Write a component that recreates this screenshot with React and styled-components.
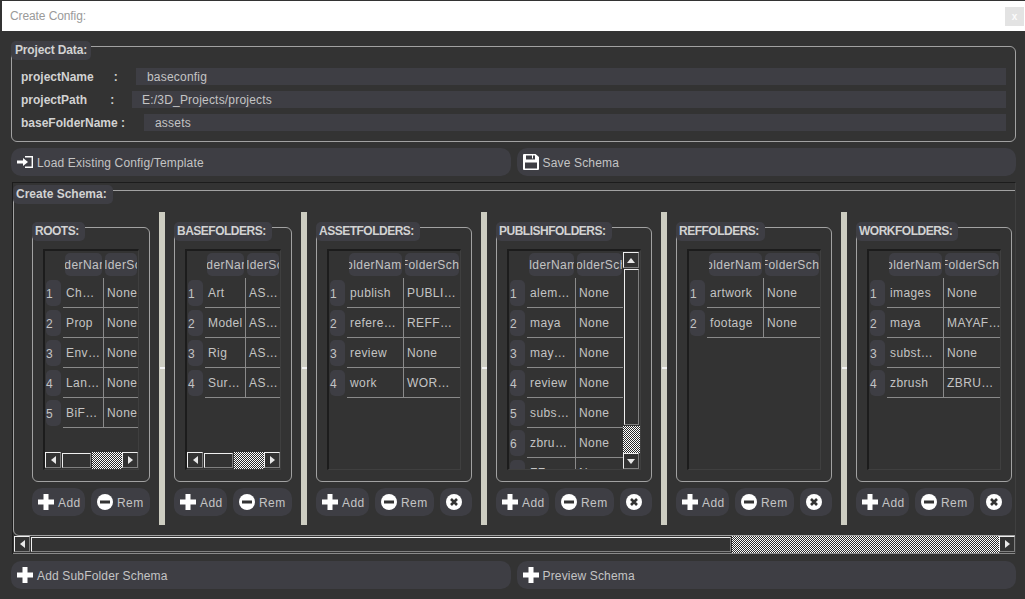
import React from 'react'
import styled, { createGlobalStyle } from 'styled-components'

const Global = createGlobalStyle`
  html, body { margin: 0; padding: 0; background: #333333; }
  * { box-sizing: border-box; }
`

const schemas = [
  { title: 'ROOTS:', width: 118, cols: [40, 35], hbar: true, rows: [['Ch…', 'None'], ['Prop', 'None'], ['Env…', 'None'], ['Lan…', 'None'], ['BiF…', 'None']] },
  { title: 'BASEFOLDERS:', width: 118, cols: [40, 35], hbar: true, rows: [['Art', 'AS…'], ['Model', 'AS…'], ['Rig', 'AS…'], ['Sur…', 'AS…']] },
  { title: 'ASSETFOLDERS:', width: 156, cols: [56, 57], del: true, rows: [['publish', 'PUBLI…'], ['refere…', 'REFF…'], ['review', 'None'], ['work', 'WOR…']] },
  { title: 'PUBLISHFOLDERS:', width: 156, cols: [48, 48], del: true, vbar: true, rows: [['alem…', 'None'], ['maya', 'None'], ['may…', 'None'], ['review', 'None'], ['subs…', 'None'], ['zbru…', 'None'], ['FF…', 'None']] },
  { title: 'REFFOLDERS:', width: 156, cols: [56, 57], del: true, rows: [['artwork', 'None'], ['footage', 'None']] },
  { title: 'WORKFOLDERS:', width: 156, cols: [56, 57], del: true, rows: [['images', 'None'], ['maya', 'MAYAF…'], ['subst…', 'None'], ['zbrush', 'ZBRU…']] },
]

const PlusIcon = () => (
  <svg width="16" height="16" viewBox="0 0 16 16"><path d="M5.500 0h5v5.500H16v5h-5.500V16h-5v-5.500H0v-5h5.500z" fill="#fff" /></svg>
)
const MinusIcon = () => (
  <svg width="16" height="16" viewBox="0 0 16 16"><circle cx="8" cy="8" r="8" fill="#fff" /><rect x="3" y="6.500" width="10" height="3" fill="#333" /></svg>
)
const CloseIcon = () => (
  <svg width="16" height="16" viewBox="0 0 16 16"><circle cx="8" cy="8" r="8" fill="#fff" /><path d="M5 5l6 6M11 5l-6 6" stroke="#333" strokeWidth="2.6" /></svg>
)
const LoadIcon = () => (
  <svg width="16" height="12" viewBox="0 0 16 12"><path d="M8 .7h7.300v10.600H8" fill="none" stroke="#fff" strokeWidth="1.400" /><path d="M0 4.500h6V2l5 4-5 4V7.500H0z" fill="#fff" /></svg>
)
const SaveIcon = () => (
  <svg width="16" height="16" viewBox="0 0 16 16"><path fillRule="evenodd" d="M0 1a1 1 0 0 1 1-1h11.500L16 3v12a1 1 0 0 1-1 1H1a1 1 0 0 1-1-1zM3 1.500V5.500h9V1.500H10V4.500H9V1.500zM2 8.500V14.500h12V8.500z" fill="#fff" /></svg>
)

const HScroll = ({ thumb }) => (
  <HBar>
    <ArrowBtn $dir="left" />
    <Thumb $grow={thumb} />
    <Checker $grow={100 - thumb} />
    <ArrowBtn $dir="right" />
  </HBar>
)

const VScroll = () => (
  <VBar>
    <ArrowBtn $dir="up" />
    <Thumb $grow={85} />
    <Checker $grow={15} />
    <ArrowBtn $dir="down" />
  </VBar>
)

const SchemaColumn = ({ schema }) => (
  <Column $width={schema.width}>
    <GroupBox>
      <Legend $caps>{schema.title}</Legend>
      <Table>
        <TableMain>
          <TableBody>
            <Row $c1={schema.cols[0]} $c2={schema.cols[1]} $head>
              <span />
              <HeadCell>folderName</HeadCell>
              <HeadCell>subFolderSchema</HeadCell>
            </Row>
            {schema.rows.map((row, i) => (
              <Row key={i} $c1={schema.cols[0]} $c2={schema.cols[1]}>
                <RowNum>{i + 1}</RowNum>
                <Cell>{row[0]}</Cell>
                <Cell $second>{row[1]}</Cell>
              </Row>
            ))}
          </TableBody>
          {schema.vbar && <VScroll />}
        </TableMain>
        {schema.hbar && <HScroll thumb={47} />}
      </Table>
    </GroupBox>
    <ActionRow>
      <SmallButton $w={53}><PlusIcon /><ButtonText>Add</ButtonText></SmallButton>
      <SmallButton $w={59}><MinusIcon /><ButtonText>Rem</ButtonText></SmallButton>
      {schema.del && <SmallButton $w={32}><CloseIcon /></SmallButton>}
    </ActionRow>
  </Column>
)

export default function App() {
  return (
    <>
      <Global />
      <Page>
        <TitleBar>
          <TitleText>Create Config:</TitleText>
          <WinClose>x</WinClose>
        </TitleBar>
        <Content>
          <ProjectBox>
            <Legend>Project Data:</Legend>
            <FieldRow>
              <FieldLabel $w={115}>projectName{'      '}:</FieldLabel>
              <FieldInput $pad={11}>baseconfig</FieldInput>
            </FieldRow>
            <FieldRow>
              <FieldLabel $w={111}>projectPath{'       '}:</FieldLabel>
              <FieldInput $pad={10}>E:/3D_Projects/projects</FieldInput>
            </FieldRow>
            <FieldRow>
              <FieldLabel $w={123}>baseFolderName :</FieldLabel>
              <FieldInput $pad={11}>assets</FieldInput>
            </FieldRow>
          </ProjectBox>
          <ButtonRow>
            <WideButton><LoadIcon /><ButtonText>Load Existing Config/Template</ButtonText></WideButton>
            <WideButton><SaveIcon /><ButtonText>Save Schema</ButtonText></WideButton>
          </ButtonRow>
          <SchemaFrame>
            <SchemaBox>
              <Legend $schema>Create Schema:</Legend>
              <Columns>
                {schemas.map((s, i) => (
                  <React.Fragment key={s.title}>
                    <SchemaColumn schema={s} />
                    {i < schemas.length - 1 && <Splitter />}
                  </React.Fragment>
                ))}
              </Columns>
            </SchemaBox>
            <MainHBar>
              <ArrowBtn $dir="left" />
              <Thumb $grow={699} />
              <Checker $grow={268} />
              <ArrowBtn $dir="right" />
            </MainHBar>
          </SchemaFrame>
          <ButtonRow $bottom>
            <WideButton><PlusIcon /><ButtonText>Add SubFolder Schema</ButtonText></WideButton>
            <WideButton><PlusIcon /><ButtonText>Preview Schema</ButtonText></WideButton>
          </ButtonRow>
        </Content>
      </Page>
    </>
  )
}

const Page = styled.div`
  width: 1025px;
  height: 599px;
  overflow: hidden;
  background: #333333;
  padding-top: 1px;
  font-family: "Liberation Sans", Arial, sans-serif;
  font-size: 12px;
  color: #c4c4c4;
`
const TitleBar = styled.div`
  height: 30px;
  margin-left: 2px;
  padding: 0 1px 0 8px;
  background: #fff;
  display: flex;
  align-items: center;
  justify-content: space-between;
`
const TitleText = styled.span`
  color: #9a9a9a;
  letter-spacing: -0.1px;
`
const WinClose = styled.div`
  width: 19px;
  height: 19px;
  margin-top: 1px;
  background: #e3e3e3;
  color: #fbfbfb;
  font-size: 10px;
  font-weight: bold;
  display: flex;
  align-items: center;
  justify-content: center;
`
const Content = styled.div`
  padding: 15px 9px 0 11px;
`
const Legend = styled.div`
  position: absolute;
  left: -1px;
  top: -6px;
  height: 19px;
  padding: ${p => (p.$caps || p.$schema ? '0 6px 0 3px' : '0 4px')};
  border-radius: 5px;
  background: #3e3e44;
  color: #d2d2d2;
  font-weight: bold;
  letter-spacing: ${p => (p.$caps ? '-0.5px' : p.$schema ? '0' : '-0.15px')};
  line-height: 18px;
  white-space: nowrap;
`
const ProjectBox = styled.div`
  position: relative;
  height: 96px;
  padding: 21px 9px 0 9px;
  border: 1px solid #a2a2a2;
  border-radius: 6px;
  display: flex;
  flex-direction: column;
  gap: 6px;
`
const FieldRow = styled.div`
  height: 17px;
  display: flex;
`
const FieldLabel = styled.div`
  width: ${p => p.$w}px;
  flex: none;
  white-space: pre;
  font-weight: bold;
  color: #d2d2d2;
  line-height: 19px;
`
const FieldInput = styled.div`
  flex: 1;
  padding-left: ${p => p.$pad}px;
  background: #3e3e44;
  letter-spacing: 0.2px;
  line-height: 19px;
`
const ButtonRow = styled.div`
  display: flex;
  gap: 6px;
  margin-top: ${p => (p.$bottom ? 7 : 6)}px;
`
const ButtonText = styled.span`
  padding-top: 2px;
`
const WideButton = styled.div`
  flex: 1;
  height: 28px;
  padding-left: 6px;
  border-radius: 10px;
  background: #3e3e44;
  display: flex;
  align-items: center;
  gap: 4px;
  letter-spacing: 0.16px;
`
const SchemaFrame = styled.div`
  height: 372px;
  margin: 6px 0 0 1px;
  padding-top: 7px;
  border-top: 1px solid #1c1c1c;
  border-left: 1px solid #1c1c1c;
  border-right: 1px solid #3f3f3f;
  display: flex;
  flex-direction: column;
  overflow: hidden;
`
const SchemaBox = styled.div`
  position: relative;
  flex: 1;
  min-height: 0;
  padding: 21px 0 0 18px;
  margin-right: -20px;
  border: 1px solid #a2a2a2;
  border-radius: 0 0 0 6px;
`
const Columns = styled.div`
  display: flex;
  gap: 9px;
  height: 313px;
`
const Splitter = styled.div`
  position: relative;
  width: 6px;
  flex: none;
  background: #cdcdc1;
  &::after {
    content: '';
    position: absolute;
    left: 1px;
    right: 0;
    top: 155px;
    height: 2px;
    background: #f4f4f4;
  }
`
const Column = styled.div`
  width: ${p => p.$width}px;
  flex: none;
  padding: 15px 0 9px;
  display: flex;
  flex-direction: column;
  gap: 6px;
`
const GroupBox = styled.div`
  position: relative;
  flex: 1;
  min-height: 0;
  padding: 21px 10px 11px;
  border: 1px solid #a2a2a2;
  border-radius: 6px;
  display: flex;
`
const Table = styled.div`
  flex: 1;
  min-width: 0;
  border-top: 2px solid #1c1c1c;
  border-left: 2px solid #1c1c1c;
  border-right: 1px solid #3f3f3f;
  border-bottom: 1px solid #3f3f3f;
  display: flex;
  flex-direction: column;
  overflow: hidden;
`
const TableMain = styled.div`
  flex: 1;
  min-height: 0;
  display: flex;
`
const TableBody = styled.div`
  flex: 1;
  min-width: 0;
  overflow: hidden;
`
const Row = styled.div`
  display: grid;
  grid-template-columns: 18px ${p => p.$c1}px ${p => p.$c2}px;
  height: ${p => (p.$head ? 27 : 30)}px;
`
const HeadCell = styled.div`
  height: 23px;
  margin: 2px 1px 0 2px;
  padding-top: 1px;
  border-radius: 5px;
  background: #3e3e44;
  display: flex;
  align-items: center;
  justify-content: center;
  overflow: hidden;
  white-space: nowrap;
  letter-spacing: 0.45px;
`
const RowNum = styled.div`
  width: 15px;
  height: 26px;
  margin: 2px 0 0 1px;
  padding: 1px 0 0 0;
  border-radius: 5px;
  background: #3e3e44;
  display: flex;
  align-items: center;
`
const Cell = styled.div`
  padding-left: 3px;
  border-bottom: 1px solid #8a8a8a;
  border-left: ${p => (p.$second ? '1px solid #8a8a8a' : 'none')};
  line-height: 31px;
  white-space: nowrap;
  overflow: hidden;
  letter-spacing: 0.4px;
`
const HBar = styled.div`
  height: 17px;
  flex: none;
  display: flex;
  background: #333;
`
const VBar = styled.div`
  width: 17px;
  flex: none;
  padding: 1px 0 0;
  display: flex;
  flex-direction: column;
  background: #333;
`
const MainHBar = styled(HBar)`
  height: 18px;
  padding-left: 1px;
  border-bottom: 1px solid #8a8a8a;
`
const arrows = {
  left: 'border-right: 5px solid #e8e8e8; border-top: 4px solid transparent; border-bottom: 4px solid transparent;',
  right: 'border-left: 5px solid #e8e8e8; border-top: 4px solid transparent; border-bottom: 4px solid transparent;',
  up: 'border-bottom: 5px solid #e8e8e8; border-left: 4px solid transparent; border-right: 4px solid transparent;',
  down: 'border-top: 5px solid #e8e8e8; border-left: 4px solid transparent; border-right: 4px solid transparent;',
}
const ArrowBtn = styled.div`
  width: 16px;
  height: 16px;
  flex: none;
  border: 1px solid;
  border-color: #f0f0f0 #808080 #808080 #f0f0f0;
  background: #333;
  display: flex;
  align-items: center;
  justify-content: center;
  &::before {
    content: '';
    width: 0;
    height: 0;
    ${p => arrows[p.$dir]}
  }
`
const Thumb = styled.div`
  flex: ${p => p.$grow} 1 0;
  margin: 1px;
  border: 1px solid;
  border-color: #f0f0f0 #808080 #808080 #f0f0f0;
  background: #333;
`
const Checker = styled.div`
  flex: ${p => p.$grow} 1 0;
  background: repeating-conic-gradient(#2a2a2a 0 25%, #fff 0 50%) 0 0 / 2px 2px;
`
const ActionRow = styled.div`
  display: flex;
  gap: 6px;
`
const SmallButton = styled.div`
  width: ${p => p.$w}px;
  height: 28px;
  padding-left: 6px;
  flex: none;
  border-radius: 10px;
  background: #3e3e44;
  display: flex;
  align-items: center;
  gap: 4px;
  letter-spacing: 0.45px;
`
